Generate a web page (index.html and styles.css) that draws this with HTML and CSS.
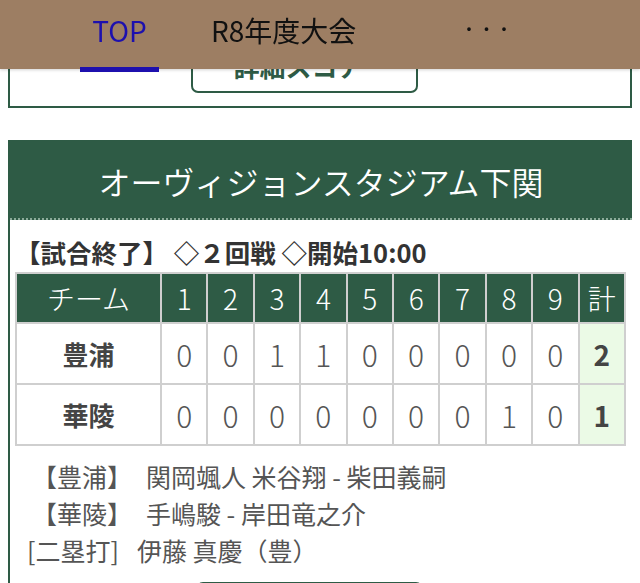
FILE: index.html
```html
<!DOCTYPE html>
<html lang="ja">
<head>
<meta charset="utf-8">
<title>試合結果</title>
<link rel="stylesheet" href="styles.css">
</head>
<body>
<nav class="nav">
  <a class="tab tab-active">TOP</a>
  <a class="tab tab-season">R8年度大会</a>
  <span class="more">・・・</span>
</nav>
<main class="page">
  <section class="prev-card">
    <a class="btn">詳細スコア</a>
  </section>
  <section class="card">
    <h2 class="card-head">オーヴィジョンスタジアム下関</h2>
    <div class="card-body">
      <p class="result">【試合終了】 ◇２回戦 ◇開始10:00</p>
      <table class="score">
        <colgroup>
          <col class="col-team">
          <col><col><col><col><col><col><col><col><col><col>
        </colgroup>
        <thead>
          <tr><th>チーム</th><th>1</th><th>2</th><th>3</th><th>4</th><th>5</th><th>6</th><th>7</th><th>8</th><th>9</th><th>計</th></tr>
        </thead>
        <tbody>
          <tr><td class="team">豊浦</td><td>0</td><td>0</td><td>1</td><td>1</td><td>0</td><td>0</td><td>0</td><td>0</td><td>0</td><td class="total">2</td></tr>
          <tr><td class="team">華陵</td><td>0</td><td>0</td><td>0</td><td>0</td><td>0</td><td>0</td><td>0</td><td>1</td><td>0</td><td class="total">1</td></tr>
        </tbody>
      </table>
      <div class="players">
        <div class="p-row"><span class="p-team">【豊浦】</span><span>関岡颯人 米谷翔 - 柴田義嗣</span></div>
        <div class="p-row"><span class="p-team">【華陵】</span><span>手嶋駿 - 岸田竜之介</span></div>
      </div>
      <p class="hits"><span class="hit-label">[二塁打]</span><span>伊藤 真慶（豊）</span></p>
      <a class="btn btn-low">詳細スコア</a>
    </div>
  </section>
</main>
</body>
</html>
```
FILE: styles.css
```css
* { box-sizing: border-box; }
html, body { margin: 0; padding: 0; background: #fff; }
body {
  font-family: "Noto Sans CJK JP", "Noto Sans", sans-serif;
  color: #333;
  overflow: hidden;
}

/* Navigation bar */
.nav {
  position: fixed;
  top: 0; left: 0; right: 0;
  height: 69px;
  background: #9d7e63;
  display: flex;
  align-items: flex-start;
  padding-left: 80px;
  box-shadow: 0 1px 3px rgba(0,0,0,.18);
  z-index: 10;
}
.tab {
  display: block;
  height: 72px;
  padding: 0 12px;
  font-size: 28px;
  line-height: 60px;
  color: #111;
  text-decoration: none;
  border-bottom: 5px solid transparent;
}
.tab-active {
  width: 79px;
  text-align: center;
  padding: 0;
  color: #1d10ae;
  border-bottom-color: #1d10ae;
}
.tab-season { margin-left: 40px; }
.more {
  margin-left: 92px;
  font-size: 17.5px;
  line-height: 58px;
  color: #111;
}

/* Page */
.page { padding: 0 8px; }

.prev-card {
  border: 2px solid #2e5b45;
  border-top: none;
  padding: 37px 0 13px 181px;
}
.btn {
  display: flex;
  align-items: center;
  justify-content: center;
  width: 227px;
  height: 56px;
  border: 2px solid #2e5b45;
  border-radius: 7px;
  font-size: 26px;
  font-weight: bold;
  color: #2e5b45;
  padding-right: 12px;
  text-decoration: none;
}

.card {
  margin-top: 32px;
  border-left: 2px solid #2e5b45;
}
.card-head {
  margin: 0;
  height: 80px;
  background: #2e5b45;
  color: #fff;
  font-size: 32px;
  font-weight: 350;
  text-align: center;
  line-height: 74px;
  padding-top: 4px;
  border-bottom: 2px dotted #8bab99;
}
.card-body { padding: 0 6px 0 5px; }

.result {
  margin: 0;
  padding-top: 15px;
  font-size: 25.5px;
  line-height: 34px;
  font-weight: bold;
  color: #333;
  white-space: nowrap;
}

.score {
  width: 100%;
  margin-top: 3px;
  border-collapse: collapse;
  table-layout: fixed;
}
.col-team { width: 145px; }
.score th, .score td {
  border: 2px solid #cfcfcf;
  text-align: center;
  padding: 0;
}
.score th {
  height: 50px;
  background: #2e5b45;
  color: #fff;
  font-size: 28px;
  font-weight: 300;
}
.score td {
  height: 61px;
  font-size: 30px;
  font-weight: 300;
  color: #555;
}
.score td.team {
  font-size: 26px;
  font-weight: bold;
  color: #444;
}
.score td.total {
  background: #ebfae6;
  font-size: 28px;
  font-weight: bold;
  color: #444;
}

.players {
  margin-top: 12px;
  padding-left: 17px;
  font-size: 25px;
  line-height: 37px;
  color: #555;
}
.p-row { display: flex; }
.p-team { width: 114px; }

.hits {
  margin: 0;
  padding-left: 12px;
  font-size: 25px;
  line-height: 37px;
  color: #555;
  display: flex;
}
.hit-label { width: 110px; }

.btn-low { margin: 13px 0 0 181px; }
```
